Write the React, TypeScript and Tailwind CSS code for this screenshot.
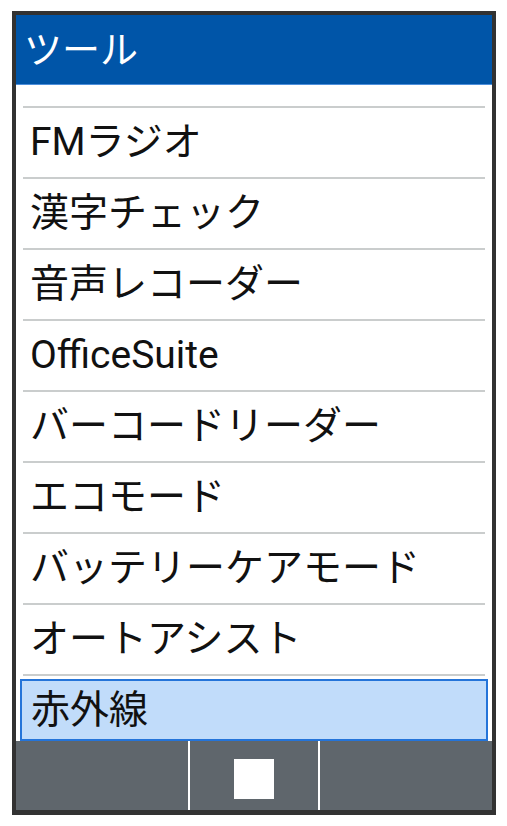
import React from "react";

const items = [
  "FMラジオ",
  "漢字チェック",
  "音声レコーダー",
  "OfficeSuite",
  "バーコードリーダー",
  "エコモード",
  "バッテリーケアモード",
  "オートアシスト",
];

const font = "font-['Roboto','Noto_Sans_CJK_JP',sans-serif]";

export default function App() {
  return (
    <div className={`w-[507px] h-[826px] bg-white pt-[11px] pl-[12px] ${font}`}>
      <div className="w-[484px] h-[804px] border-x-4 border-t-4 border-b-[5px] border-[#323232] flex flex-col bg-white">
        {/* header */}
        <div className="h-[70px] shrink-0 bg-[#0055a8] border-b border-[#4d8fdc] flex items-center pl-[8px]">
          <span className="text-white text-[38px] leading-none">ツール</span>
        </div>

        <div className="h-[21px] shrink-0" />

        {/* list */}
        <div className="flex flex-col">
          {items.map((item) => (
            <div key={item} className="mx-[7px]">
              <div className="h-[2px] bg-[#cacdcd]" />
              <div className="h-[69px] flex items-center pl-[7px]">
                <span className="text-[39px] leading-none text-[#111]">{item}</span>
              </div>
            </div>
          ))}
          <div className="mx-[7px] h-[2px] bg-[#cacdcd]" />
        </div>

        <div className="h-[3px] shrink-0" />

        {/* selected row */}
        <div className="mx-[4px] h-[62px] shrink-0 border-2 border-[#2474d9] bg-[#c1dcfa] flex items-center pl-[9px]">
          <span className="text-[39px] leading-none text-[#111]">赤外線</span>
        </div>

        {/* soft key bar */}
        <div className="flex-1 bg-[#5f666c] flex">
          <div className="w-[172px]" />
          <div className="w-[2px] bg-white" />
          <div className="w-[128px] flex justify-center pt-[18px]">
            <div className="w-[40px] h-[40px] bg-white" />
          </div>
          <div className="w-[2px] bg-white" />
          <div className="flex-1" />
        </div>
      </div>
    </div>
  );
}
